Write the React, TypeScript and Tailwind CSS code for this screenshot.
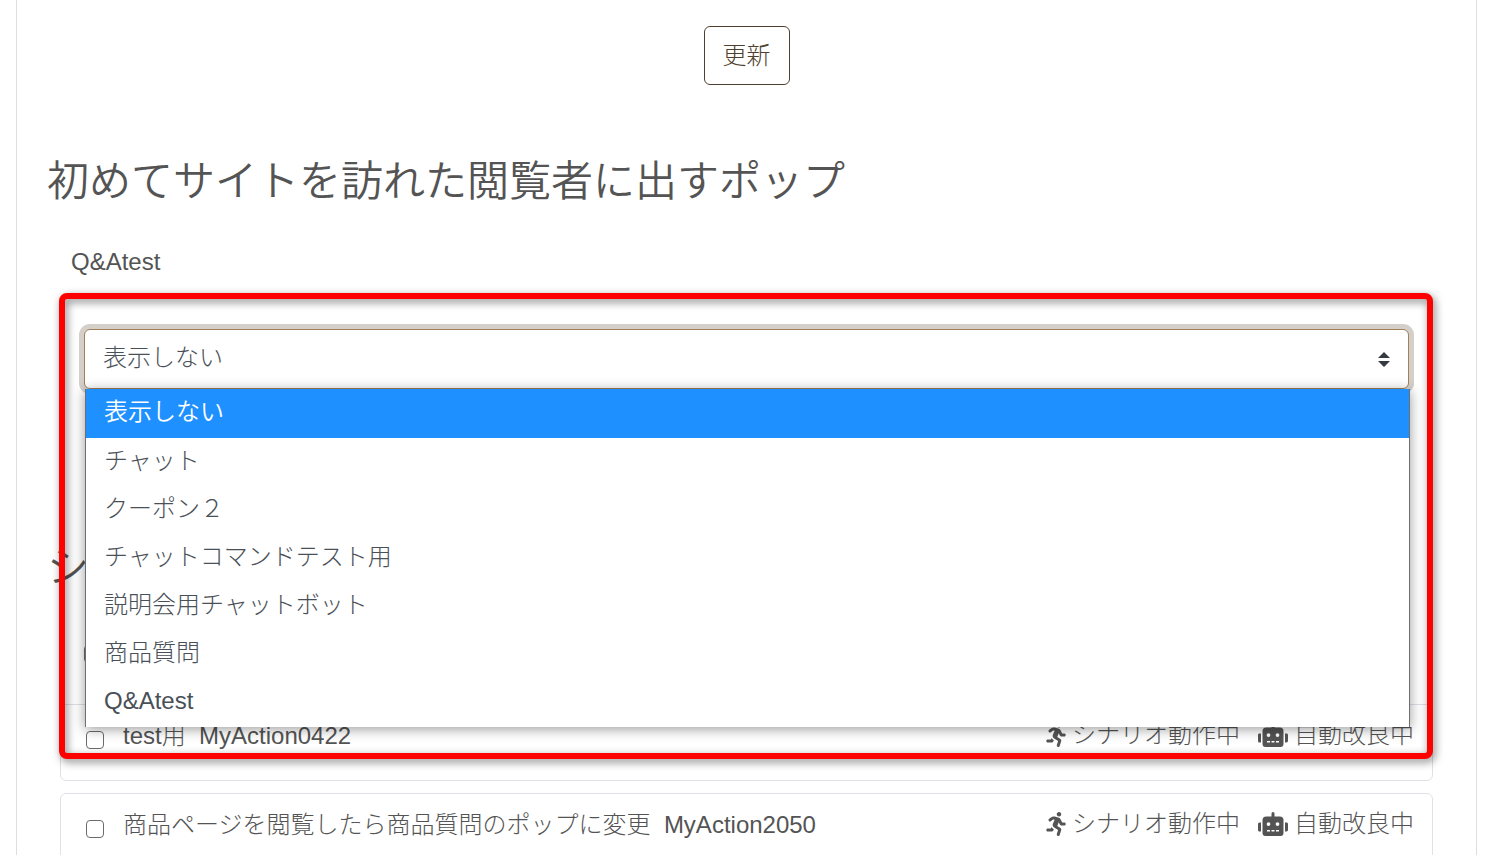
import { useState } from 'react';
import { FaRobot, FaRunning } from 'react-icons/fa';

const POPUPS = [
  '表示しない',
  'チャット',
  'クーポン２',
  'チャットコマンドテスト用',
  '説明会用チャットボット',
  '商品質問',
  'Q&Atest',
];

const SCENARIOS = [
  { id: 'MyAction0422', name: 'test用' },
  { id: 'MyAction2050', name: '商品ページを閲覧したら商品質問のポップに変更' },
];

const checkboxClassName =
  'h-[18px] w-[18px] shrink-0 appearance-none rounded-[4px] border border-[#6b6b6b] bg-white checked:bg-[#1e90ff]';

function PopupSelect() {
  const [value, setValue] = useState(POPUPS[0]);

  return (
    <div className="relative">
      <select
        id="first-visit-popup"
        value={value}
        onChange={(e) => setValue(e.target.value)}
        className="block h-[60px] w-full appearance-none rounded-md border border-[#a17f57] bg-white px-[18px] pb-[2px] text-2xl font-light text-[#495057] shadow-[0_0_0_5px_#d4cfc9] outline-none"
      >
        {POPUPS.map((name) => (
          <option key={name}>{name}</option>
        ))}
      </select>
      <svg
        viewBox="0 0 4 5"
        className="pointer-events-none absolute right-[19px] top-[23px] h-[15px] w-3 fill-[#343a40]"
      >
        <path d="M2 0L0 2h4zm0 5L0 3h4z" />
      </svg>

      {/* Open option list */}
      <ul
        role="listbox"
        aria-label="ポップ"
        className="absolute left-px top-full z-10 w-full border-x border-[#6f6f6f] bg-white pb-px shadow-[0_2px_12px_rgba(0,0,0,0.4)]"
      >
        {POPUPS.map((name) => (
          <li
            key={name}
            role="option"
            aria-selected={name === value}
            onClick={() => setValue(name)}
            className="h-12 px-[18px] text-2xl leading-[46px] font-light text-[#495057] aria-selected:h-[49px] aria-selected:bg-[#1e90ff] aria-selected:font-[350] aria-selected:text-white"
          >
            {name}
          </li>
        ))}
      </ul>
    </div>
  );
}

function ScenarioCard({ id, name }: { id: string; name: string }) {
  return (
    <li className="flex h-[77px] items-start justify-between rounded-md border border-[#dee2e6] pr-[18px] pl-[25px]">
      <label className="flex items-start gap-[19px]">
        <input type="checkbox" className={`mt-[26px] ${checkboxClassName}`} />
        <span className="mt-[13px] whitespace-pre leading-9">
          {name}
          {'  '}
          {id}
        </span>
      </label>
      <div className="mt-3 flex gap-[18px] leading-9">
        <span className="flex items-center gap-[6px]">
          <FaRunning className="h-6 w-5" />
          シナリオ動作中
        </span>
        <span className="flex items-center gap-[6px]">
          <FaRobot className="h-6 w-[30px]" />
          自動改良中
        </span>
      </div>
    </li>
  );
}

export default function App() {
  return (
    <div className="h-screen overflow-hidden bg-white pr-[14px] pl-4 font-['Liberation_Sans','Noto_Sans_CJK_JP',sans-serif] text-2xl font-light text-[#545454]">
      <main className="min-h-screen border-x border-[#dedede] px-[30px] pt-[26px]">
        <div className="flex justify-center">
          <button
            type="button"
            className="h-[59px] rounded-md border border-[#4f3f30] px-[18px] text-[#4f3f30]"
          >
            更新
          </button>
        </div>

        <h2 className="mt-[72px] text-[42px] leading-[50px] font-[350]">
          初めてサイトを訪れた閲覧者に出すポップ
        </h2>

        <label htmlFor="first-visit-popup" className="mt-[37px] block px-6 leading-9">
          Q&Atest
        </label>

        <div className="relative">
          <div className="px-[37px] pt-[49px]">
            <PopupSelect />
          </div>

          <h2 className="mt-[154px] text-[42px] leading-[50px] font-[350]">シ</h2>

          <div className="mt-[46px] h-[65px] px-[37px]">
            <input type="checkbox" aria-label="すべて選択" className={checkboxClassName} />
          </div>

          <ul className="flex flex-col gap-3 px-[13px]">
            {SCENARIOS.map((scenario) => (
              <ScenarioCard key={scenario.id} {...scenario} />
            ))}
          </ul>

          {/* Highlight frame */}
          <div className="pointer-events-none absolute right-[13px] left-3 top-[13px] z-20 h-[466px] rounded-lg border-6 border-[#ff0000] drop-shadow-[2px_3px_4px_rgba(0,0,0,0.5)]" />
        </div>
      </main>
    </div>
  );
}
